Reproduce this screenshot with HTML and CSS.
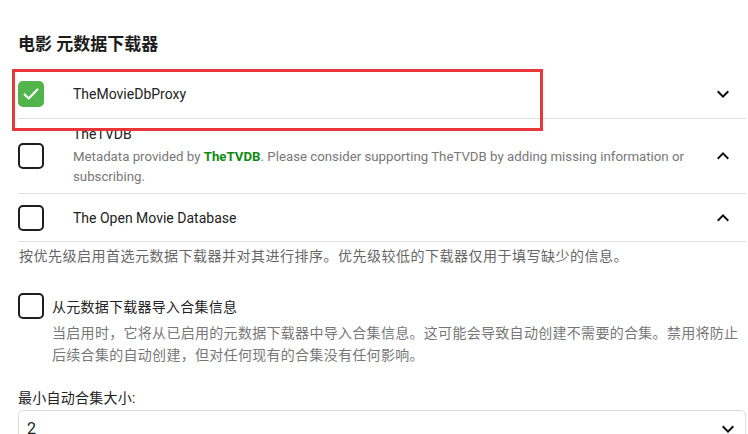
FILE: index.html
```html
<!DOCTYPE html>
<html lang="zh-CN">
<head>
<meta charset="utf-8">
<title>元数据下载器</title>
<link rel="stylesheet" href="styles.css">
</head>
<body>
<div class="page">
  <h2 class="heading">电影 元数据下载器</h2>
  <div class="list">
    <div class="row row-single">
      <span class="check checked">
        <svg viewBox="0 0 24 24" width="24" height="24"><path d="M5 12.5l4.5 4.5L19 7" fill="none" stroke="#fff" stroke-width="2.3" stroke-linecap="round" stroke-linejoin="round"/></svg>
      </span>
      <div class="row-text"><div class="row-title">TheMovieDbProxy</div></div>
      <svg class="chev" viewBox="0 0 24 24" width="24" height="24"><path d="M16.59 8.59L12 13.17 7.41 8.59 6 10l6 6 6-6z"/></svg>
    </div>
    <div class="row row-multi">
      <span class="check"></span>
      <div class="row-text">
        <div class="row-title">TheTVDB</div>
        <div class="row-desc">Metadata provided by <b class="link">TheTVDB</b>. Please consider supporting TheTVDB by adding missing information or subscribing.</div>
      </div>
      <svg class="chev" viewBox="0 0 24 24" width="24" height="24"><path d="M12 8l-6 6 1.41 1.41L12 10.83l4.59 4.58L18 14z"/></svg>
    </div>
    <div class="row row-last">
      <span class="check"></span>
      <div class="row-text"><div class="row-title">The Open Movie Database</div></div>
      <svg class="chev" viewBox="0 0 24 24" width="24" height="24"><path d="M12 8l-6 6 1.41 1.41L12 10.83l4.59 4.58L18 14z"/></svg>
    </div>
  </div>
  <p class="help">按优先级启用首选元数据下载器并对其进行排序。优先级较低的下载器仅用于填写缺少的信息。</p>

  <div class="option">
    <span class="check"></span>
    <div class="option-text">
      <div class="option-title">从元数据下载器导入合集信息</div>
      <div class="option-desc">当启用时，它将从已启用的元数据下载器中导入合集信息。这可能会导致自动创建不需要的合集。禁用将防止后续合集的自动创建，但对任何现有的合集没有任何影响。</div>
    </div>
  </div>

  <div class="field">
    <label class="field-label">最小自动合集大小:</label>
    <div class="select">
      <span class="select-value">2</span>
      <svg class="chev" viewBox="0 0 24 24" width="24" height="24"><path d="M16.59 8.59L12 13.17 7.41 8.59 6 10l6 6 6-6z"/></svg>
    </div>
  </div>

  <div class="highlight"></div>
</div>
</body>
</html>
```
FILE: styles.css
```css
html, body {
  margin: 0;
  padding: 0;
  background: #fff;
  overflow: hidden;
}
body {
  font-family: Roboto, "Noto Sans CJK SC", sans-serif;
  color: #222;
}
.page {
  position: relative;
  width: 728px;
  padding: 32px 0 0 18px;
}
.heading {
  margin: 0 0 14px;
  font-size: 17px;
  line-height: 24px;
  font-weight: 700;
  color: #1c1c1c;
}
.list {
  display: flex;
  flex-direction: column;
}
.row {
  display: flex;
  align-items: center;
  border-bottom: 1px solid #e0e0e0;
}
.row-single { height: 48px; }
.row-multi { padding: 5px 0 6px; }
.row-last { height: 47px; }
.check {
  flex: none;
  box-sizing: border-box;
  width: 26px;
  height: 26px;
  border: 2px solid #1e1e1e;
  border-radius: 5px;
  display: flex;
  align-items: center;
  justify-content: center;
}
.check.checked {
  background: #52b54b;
  border-color: #52b54b;
}
.row-text {
  flex: 1;
  margin-left: 29px;
  padding-right: 10px;
}
.row-title {
  font-size: 14px;
  line-height: 20px;
  color: #222;
}
.row-desc {
  margin-top: 3px;
  font-size: 13.25px;
  line-height: 20px;
  color: #777;
}
.link {
  color: #108a10;
  font-weight: 700;
}
.chev {
  flex: none;
  fill: #111;
  margin-right: 11px;
}
.help {
  margin: 4px 0 0;
  font-size: 14px;
  letter-spacing: 0.5px;
  line-height: 20px;
  color: #666;
  padding-left: 1px;
}
.option {
  display: flex;
  align-items: flex-start;
  margin-top: 27px;
}
.option-text {
  margin-left: 8px;
  flex: 1;
}
.option-title {
  margin-top: 3px;
  font-size: 14px;
  letter-spacing: 0.25px;
  line-height: 22px;
  color: #222;
}
.option-desc {
  margin-top: 4px;
  font-size: 14px;
  letter-spacing: 0.3px;
  line-height: 22px;
  color: #777;
}
.field {
  margin-top: 22px;
}
.field-label {
  display: block;
  font-size: 14px;
  letter-spacing: 0.25px;
  line-height: 20px;
  color: #222;
}
.select {
  margin-top: 2px;
  box-sizing: border-box;
  height: 44px;
  border: 1px solid #dcdcdc;
  border-radius: 5px;
  display: flex;
  align-items: flex-start;
  justify-content: space-between;
  padding: 7px 0 0 8px;
}
.select-value {
  font-size: 16px;
  line-height: 22px;
  color: #222;
}
.select .chev {
  margin-right: 5px;
  margin-top: -1px;
}
.highlight {
  position: absolute;
  left: 12px;
  top: 69px;
  width: 531px;
  height: 62px;
  box-sizing: border-box;
  border: 3px solid #e8363a;
  pointer-events: none;
}
```
